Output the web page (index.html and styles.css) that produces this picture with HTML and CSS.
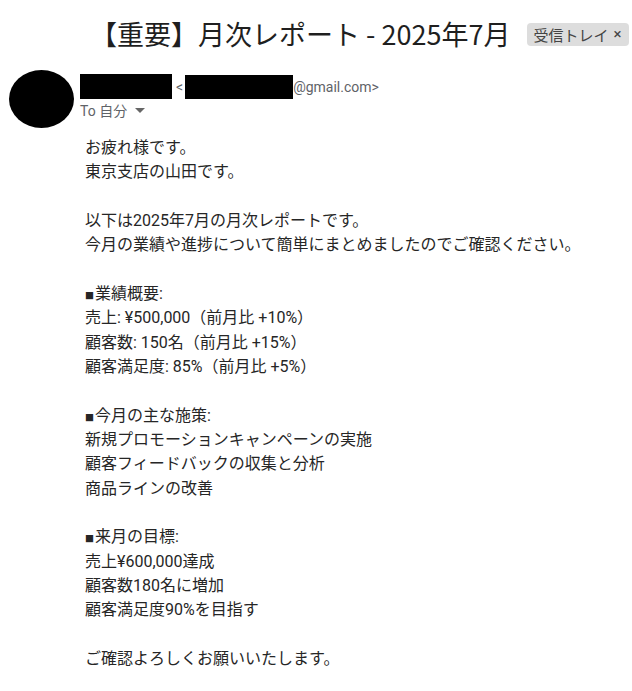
FILE: index.html
```html
<!DOCTYPE html>
<html lang="ja">
<head>
<meta charset="utf-8">
<link rel="stylesheet" href="styles.css">
</head>
<body>
<div class="page">
  <div class="subject-row">
    <h1 class="subject">【重要】月次レポート - 2025年7月</h1>
    <span class="label">受信トレイ <span class="label-x">×</span></span>
  </div>
  <div class="header">
    <div class="avatar"></div>
    <div class="sender">
      <div class="from">
        <span class="redact name"></span>
        <span class="addr">&lt;<span class="redact mail"></span>@gmail.com&gt;</span>
      </div>
      <div class="to">To 自分 <svg class="caret" width="10" height="6" viewBox="0 0 10 6"><path d="M0 0h10L5 5z" fill="#666"/></svg></div>
    </div>
  </div>
  <div class="body">
    <p>お疲れ様です。<br>東京支店の山田です。</p>
    <p>以下は2025年7月の月次レポートです。<br>今月の業績や進捗について簡単にまとめましたのでご確認ください。</p>
    <p><span class="sq">■</span>業績概要:<br>売上: ¥500,000（前月比 +10%）<br>顧客数: 150名（前月比 +15%）<br>顧客満足度: 85%（前月比 +5%）</p>
    <p><span class="sq">■</span>今月の主な施策:<br>新規プロモーションキャンペーンの実施<br>顧客フィードバックの収集と分析<br>商品ラインの改善</p>
    <p><span class="sq">■</span>来月の目標:<br>売上¥600,000達成<br>顧客数180名に増加<br>顧客満足度90%を目指す</p>
    <p>ご確認よろしくお願いいたします。</p>
  </div>
</div>
</body>
</html>
```
FILE: styles.css
```css
* { box-sizing: border-box; }
html, body { margin: 0; padding: 0; background: #fff; }
body {
  font-family: Roboto, "Noto Sans CJK JP", sans-serif;
  color: #222;
}
.page { width: 632px; padding: 0; }
.subject-row {
  display: flex;
  align-items: center;
  padding: 14px 0 0 90px;
  height: 54px;
}
.subject {
  margin: 0;
  font-weight: 400;
  font-size: 27px;
  line-height: 36px;
  color: #1f1f1f;
  font-family: "Noto Sans CJK JP", sans-serif;
  white-space: nowrap;
}
.label {
  margin-left: 17px;
  background: #dddddd;
  border-radius: 4px;
  height: 23px;
  padding: 0 8px 0 6px;
  display: inline-flex;
  align-items: center;
  font-size: 15px;
  color: #444;
  font-family: "Noto Sans CJK JP", sans-serif;
  white-space: nowrap;
}
.label-x { margin-left: 5px; font-family: Roboto, sans-serif; font-size: 15px; }
.header {
  display: flex;
  padding: 16px 0 0 9px;
}
.avatar {
  width: 65px;
  height: 58px;
  border-radius: 50%;
  background: #000;
  flex: none;
}
.sender { margin-left: 6px; padding-top: 4px; }
.from { display: flex; align-items: center; height: 25px; }
.redact { display: inline-block; background: #000; }
.name { width: 92px; height: 25px; }
.addr {
  margin-left: 4px;
  font-size: 14px;
  color: #5f6368;
  display: inline-flex;
  align-items: center;
}
.mail { width: 108px; height: 24px; margin-left: 2px; }
.to {
  font-size: 14px;
  color: #5f6368;
  margin-top: 1px;
  display: flex;
  align-items: center;
  gap: 4px;
  font-family: Roboto, "Noto Sans CJK JP", sans-serif;
}
.caret { margin-left: 4px; margin-top: 2px; }
.body {
  padding: 8px 0 0 85px;
  font-size: 16px;
  line-height: 24.33px;
  color: #262626;
}
.body p { margin: 0 0 24.33px 0; }
.sq { font-size: 9px; line-height: 0; margin-right: 1px; }
```
